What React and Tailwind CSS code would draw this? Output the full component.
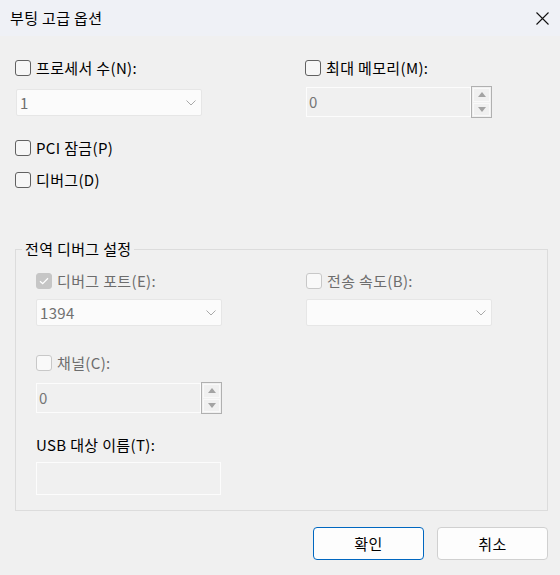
import React from "react";
import clsx from "clsx";

const CheckBox = ({ label, checked, disabled }) => (
  <div
    className={clsx(
      "flex h-[20px] items-center gap-[5px] whitespace-nowrap",
      disabled ? "text-[#6d6d6d]" : "text-black"
    )}
  >
    <span
      className={clsx(
        "flex h-[16px] w-[16px] shrink-0 items-center justify-center rounded-[3px] border",
        checked
          ? "border-[#c6c6c6] bg-[#c6c6c6]"
          : disabled
          ? "border-[#c8c8c8] bg-[#f9f9f9]"
          : "border-[#616161] bg-[#f6f6f6]"
      )}
    >
      {checked && (
        <svg width="10" height="8" viewBox="0 0 10 8">
          <path d="M1 4.2 L3.7 6.7 L9 1.2" fill="none" stroke="#fff" strokeWidth="1.3" />
        </svg>
      )}
    </span>
    <span>{label}</span>
  </div>
);

const Combo = ({ value, className }) => (
  <div
    className={clsx(
      "flex h-[27px] w-[186px] items-center justify-between rounded-[2px] border border-[#e6e6e6] bg-[#fbfbfb] pl-[3px] pr-[5px] text-[#707070]",
      className
    )}
  >
    <span>{value}</span>
    <svg width="10" height="6" viewBox="0 0 10 6">
      <polyline points="0.5,0.5 5,5 9.5,0.5" fill="none" stroke="#a8a8a8" strokeWidth="1" />
    </svg>
  </div>
);

const Arrow = ({ up }) => (
  <svg width="8" height="5" viewBox="0 0 8 5">
    <polygon points={up ? "0,5 8,5 4,0" : "0,0 8,0 4,5"} fill="#a3a3a3" />
  </svg>
);

const Spinner = ({ value, className }) => (
  <div className={clsx("flex h-[32px] w-[186px] items-center", className)}>
    <div className="flex h-[30px] flex-1 items-center border border-[#fcfcfc] pb-[1px] pl-[2px] text-[#757575]">
      {value}
    </div>
    <div className="flex h-[32px] w-[21px] flex-col gap-[1px] border border-[#b0b0b0] p-[1px]">
      <div className="flex flex-1 items-center justify-center border border-[#f9f9f9]">
        <Arrow up />
      </div>
      <div className="flex flex-1 items-center justify-center border border-[#f9f9f9]">
        <Arrow />
      </div>
    </div>
  </div>
);

const App = () => {
  return (
    <div className="flex h-[575px] w-[560px] flex-col bg-[#f0f0f0] font-['Noto_Sans_CJK_KR',sans-serif] text-[15px] leading-[20px] tracking-[0.35px] text-black">
      <div className="flex h-[36px] shrink-0 items-center justify-between bg-[#eff1f6] pl-[10px] pr-[11px]">
        <span>부팅 고급 옵션</span>
        <svg width="13" height="13" viewBox="0 0 13 13">
          <path d="M0.5 0.5 L12.5 12.5 M12.5 0.5 L0.5 12.5" stroke="#111" strokeWidth="1.1" />
        </svg>
      </div>

      <div className="flex flex-1 flex-col pl-[15px] pr-[12px] pt-[22px]">
        <div className="flex items-start">
          <div className="w-[290px]">
            <CheckBox label="프로세서 수(N):" />
            <Combo value="1" className="ml-[1px] mt-[11px]" />
          </div>
          <div>
            <CheckBox label="최대 메모리(M):" />
            <Spinner value="0" className="ml-[1px] mt-[8px]" />
          </div>
        </div>

        <div className="mt-[20px]">
          <CheckBox label="PCI 잠금(P)" />
        </div>
        <div className="mt-[12px]">
          <CheckBox label="디버그(D)" />
        </div>

        <fieldset className="mt-[49px] w-[533px] border border-[#dcdcdc] pb-[15px]">
          <legend className="ml-[6px] px-[3px] leading-[20px]">전역 디버그 설정</legend>
          <div className="pl-[20px]">
            <div className="flex items-start">
              <div className="w-[270px]">
                <div className="mt-[12px]">
                  <CheckBox label="디버그 포트(E):" checked disabled />
                </div>
                <Combo value="1394" className="mt-[8px]" />
              </div>
              <div>
                <div className="mt-[12px]">
                  <CheckBox label="전송 속도(B):" disabled />
                </div>
                <Combo value="" className="mt-[8px]" />
              </div>
            </div>

            <div className="mt-[27px]">
              <CheckBox label="채널(C):" disabled />
            </div>
            <Spinner value="0" className="mt-[9px]" />

            <div className="mt-[21px] flex h-[20px] items-center">USB 대상 이름(T):</div>
            <div className="mt-[7px] h-[33px] w-[185px] border border-[#fcfcfc]" />
          </div>
        </fieldset>

        <div className="mt-[16px] flex justify-end gap-[13px]">
          <button className="flex h-[33px] w-[111px] items-center justify-center rounded-[4px] border border-[#0067c0] bg-[#fdfdfd]">
            확인
          </button>
          <button className="flex h-[33px] w-[111px] items-center justify-center rounded-[4px] border border-[#d0d0d0] bg-[#fdfdfd]">
            취소
          </button>
        </div>
      </div>
    </div>
  );
};

export default App;
